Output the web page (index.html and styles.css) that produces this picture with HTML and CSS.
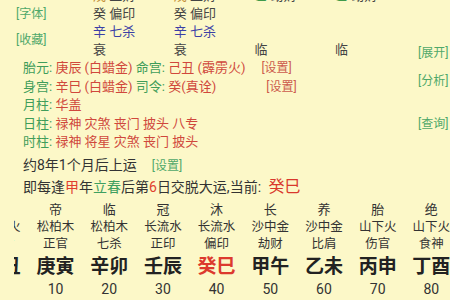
FILE: index.html
```html
<!DOCTYPE html>
<html lang="zh-CN">
<head>
<meta charset="utf-8">
<title>排盘</title>
<link rel="stylesheet" href="styles.css">
</head>
<body>
<div class="page">
  <div class="main">
    <div class="content">
      <div class="top">
        <div class="side-links">
          <span class="link">[字体]</span>
          <span class="link">[收藏]</span>
        </div>
        <div class="pillars">
          <span><b class="earth">戊</b> 正财</span>
          <span><b class="earth">戊</b> 正财</span>
          <span><b class="wood">乙</b> 劫财</span>
          <span><b class="wood">乙</b> 劫财</span>

          <span>癸 偏印</span>
          <span>癸 偏印</span>
          <span></span>
          <span></span>

          <span class="blue">辛 七杀</span>
          <span class="blue">辛 七杀</span>
          <span></span>
          <span></span>

          <span>衰</span>
          <span>衰</span>
          <span>临</span>
          <span>临</span>
        </div>
      </div>
      <div class="info">
        <p><span class="lab">胎元:</span> <span class="val">庚辰 (白蜡金)</span> <span class="lab">命宫:</span> <span class="val">己丑 (霹雳火)</span><span class="set set-a">[设置]</span></p>
        <p><span class="lab">身宫:</span> <span class="val">辛巳 (白蜡金)</span> <span class="lab">司令:</span> <span class="val">癸(真诠)</span><span class="set set-b">[设置]</span></p>
        <p><span class="lab">月柱:</span> <span class="val">华盖</span></p>
        <p><span class="lab">日柱:</span> <span class="val">禄神 灾煞 丧门 披头 八专</span></p>
        <p><span class="lab">时柱:</span> <span class="val">禄神 将星 灾煞 丧门 披头</span></p>
      </div>
      <div class="yun">
        <p>约8年1个月后上运<span class="link yun-set">[设置]</span></p>
        <p>即每逢<span class="hl-red">甲</span>年<span class="hl-green">立春</span>后第<span class="hl-red">6</span>日交脱大运,当前: <span class="cur">癸巳</span></p>
      </div>
    </div>
    <div class="actions">
      <span class="link">[展开]</span>
      <span class="link act-fx">[分析]</span>
      <span class="link act-cx">[查询]</span>
    </div>
  </div>
  <div class="dayun-wrap">
    <div class="dayun">
      <span class="r1">衰</span><span class="r1">帝</span><span class="r1">临</span><span class="r1">冠</span><span class="r1">沐</span><span class="r1">长</span><span class="r1">养</span><span class="r1">胎</span><span class="r1">绝</span>
      <span class="r2">霹雳火</span><span class="r2">松柏木</span><span class="r2">松柏木</span><span class="r2">长流水</span><span class="r2">长流水</span><span class="r2">沙中金</span><span class="r2">沙中金</span><span class="r2">山下火</span><span class="r2">山下火</span>
      <span class="r3">正财</span><span class="r3">正官</span><span class="r3">七杀</span><span class="r3">正印</span><span class="r3">偏印</span><span class="r3">劫财</span><span class="r3">比肩</span><span class="r3">伤官</span><span class="r3">食神</span>
      <span class="r4">己丑</span><span class="r4">庚寅</span><span class="r4">辛卯</span><span class="r4">壬辰</span><span class="r4 now">癸巳</span><span class="r4">甲午</span><span class="r4">乙未</span><span class="r4">丙申</span><span class="r4">丁酉</span>
      <span class="r5">0</span><span class="r5">10</span><span class="r5">20</span><span class="r5">30</span><span class="r5">40</span><span class="r5">50</span><span class="r5">60</span><span class="r5">70</span><span class="r5">80</span>
    </div>
  </div>
</div>
</body>
</html>
```

FILE: styles.css
```css
html, body {
  margin: 0;
  padding: 0;
  overflow: hidden;
  background: #fcf8c8;
}

body {
  width: 450px;
  height: 300px;
  font-family: Roboto, "Noto Sans CJK SC", sans-serif;
  color: #383838;
}

p {
  margin: 0;
  white-space: nowrap;
}

.page {
  display: flex;
  flex-direction: column;
}

.main {
  display: flex;
  margin-top: -13px;
}

.content {
  flex: 1;
  min-width: 0;
}

.top {
  display: flex;
}

.link {
  color: #4fa86a;
  font-size: 12px;
  line-height: 18px;
  white-space: nowrap;
}

.side-links {
  width: 77px;
  padding-left: 16px;
  padding-top: 18px;
  display: flex;
  flex-direction: column;
  align-items: flex-start;
  gap: 8px;
}

.pillars {
  display: grid;
  grid-template-columns: repeat(4, 80.7px);
  grid-auto-rows: 18px;
  font-size: 13px;
  line-height: 18px;
  color: #444;
}

.pillars span {
  white-space: nowrap;
}

.pillars b {
  font-weight: normal;
}

.earth { color: #c4913a; }
.wood { color: #3f9a4a; }
.blue { color: #3b3fa6; }

.info {
  padding-left: 23px;
  font-size: 13px;
  line-height: 18.5px;
}

.lab { color: #3f9d5a; }
.val { color: #d0483c; }

.set {
  color: #cc5a4c;
  font-size: 12px;
}

.set-a { margin-left: 16px; }
.set-b { margin-left: 50px; }

.yun {
  margin-top: 2px;
  padding-left: 23px;
  font-size: 14px;
  line-height: 22.5px;
  color: #333;
}

.yun-set {
  margin-left: 15px;
  font-size: 12px;
  line-height: 1;
}

.hl-red { color: #e0402f; }
.hl-green { color: #3fa060; }

.cur {
  margin-left: 4px;
  color: #d9382c;
  font-size: 16px;
  line-height: 1;
}

.actions {
  width: 32px;
  padding-top: 57px;
  display: flex;
  flex-direction: column;
  align-items: flex-start;
}

.act-fx { margin-top: 10px; }
.act-cx { margin-top: 25px; }

.dayun-wrap {
  margin-top: 3.5px;
  margin-left: 14px;
  overflow: hidden;
}

.dayun {
  margin-left: -39px;
  display: grid;
  grid-template-columns: repeat(9, 53.7px);
  text-align: center;
  color: #333;
  white-space: nowrap;
}

.r1 { font-size: 13px; line-height: 16px; }
.r2 { font-size: 12.5px; line-height: 17px; }
.r3 { font-size: 12.5px; line-height: 17.5px; }
.r4 { font-size: 19px; line-height: 28px; font-weight: bold; color: #222; }
.r4.now { color: #dc3a2e; }
.r5 { font-size: 14px; line-height: 16px; }
```
